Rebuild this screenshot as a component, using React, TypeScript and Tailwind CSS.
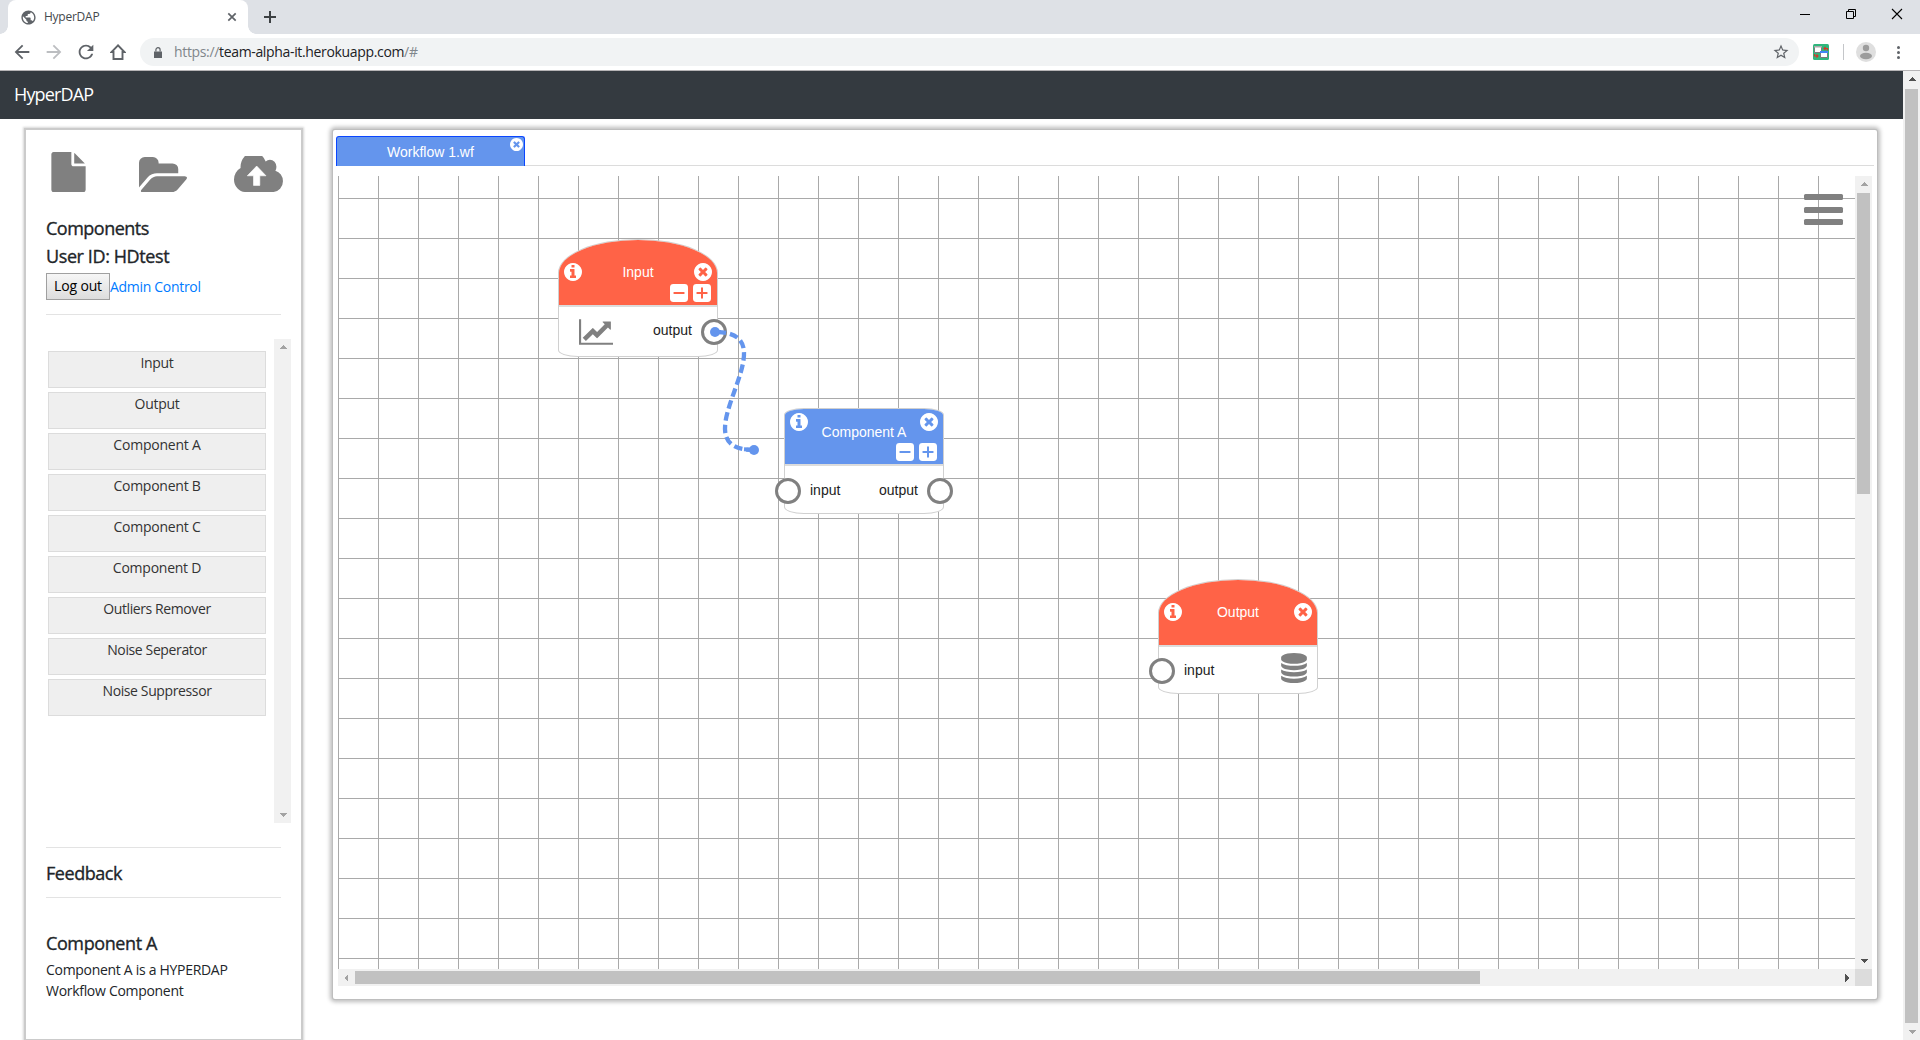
import React from "react";
import { MdPublic, MdArrowBack, MdArrowForward, MdRefresh, MdStarBorder } from "react-icons/md";

const CIRCLE =
  "M1536 896q0 209-103 385.5t-279.5 279.5-385.5 103-385.5-103-279.5-279.5-103-385.5 103-385.5 279.5-279.5 385.5-103 385.5 103 279.5 279.5 103 385.5z";

function InfoIcon({ className = "" }: { className?: string }) {
  return (
    <svg viewBox="0 128 1536 1536" className={`size-[18px] shrink-0 fill-white ${className}`}>
      <path
        fillRule="evenodd"
        d={`M1024 1376v-160q0-14-9-23t-23-9h-96v-512q0-14-9-23t-23-9h-320q-14 0-23 9t-9 23v160q0 14 9 23t23 9h96v320h-96q-14 0-23 9t-9 23v160q0 14 9 23t23 9h448q14 0 23-9t9-23zM896 480v-160q0-14-9-23t-23-9h-192q-14 0-23 9t-9 23v160q0 14 9 23t23 9h192q14 0 23-9t9-23z${CIRCLE}`}
      />
    </svg>
  );
}

function CloseIcon({ className = "size-[18px]" }: { className?: string }) {
  return (
    <svg viewBox="0 128 1536 1536" className={`shrink-0 fill-white ${className}`}>
      <path
        fillRule="evenodd"
        d={`M1149 1122q0-26-19-45l-181-181 181-181q19-19 19-45 0-27-19-46l-90-90q-19-19-46-19-26 0-45 19l-181 181-181-181q-19-19-45-19-27 0-46 19l-90 90q-19 19-19 46 0 26 19 45l181 181-181 181q-19 19-19 45 0 27 19 46l90 90q19 19 46 19 26 0 45-19l181-181 181 181q19 19 45 19 27 0 46-19l90-90q19-19 19-46z${CIRCLE}`}
      />
    </svg>
  );
}

function SquareIcon({ color, plus }: { color: string; plus?: boolean }) {
  return (
    <svg viewBox="0 0 18 18" className="size-[18px] shrink-0">
      <rect width="18" height="18" rx="3.4" fill="#fff" />
      <path d={plus ? "M4.300 9h9.400M9 4.300v9.400" : "M4.300 9h9.400"} stroke={color} strokeWidth="2" strokeLinecap="round" />
    </svg>
  );
}

function ChartIcon() {
  return (
    <svg viewBox="0 0 2048 1536" className="h-[26px] w-[34px] fill-[#808080]">
      <path d="M2048 1408v128h-2048v-1536h128v1408h1920zM1920 160v435q0 21-19.5 29.5t-35.5-7.5l-121-121-633 633q-10 10-23 10t-23-10l-233-233-416 416-192-192 585-585q10-10 23-10t23 10l233 233 464-464-121-121q-16-16-7.500-35.500t29.500-19.500h435q14 0 23 9t9 23z" />
    </svg>
  );
}

function DatabaseIcon() {
  return (
    <svg viewBox="0 0 1536 1792" className="h-[30px] w-[26px] fill-[#808080]">
      <path d="M768 768q237 0 443-43t325-127v170q0 69-103 128t-280 93.500-385 34.500-385-34.500-280-93.500-103-128v-170q119 84 325 127t443 43zM768 1536q237 0 443-43t325-127v170q0 69-103 128t-280 93.500-385 34.500-385-34.500-280-93.500-103-128v-170q119 84 325 127t443 43zM768 1152q237 0 443-43t325-127v170q0 69-103 128t-280 93.500-385 34.500-385-34.500-280-93.500-103-128v-170q119 84 325 127t443 43zM768 0q208 0 385 34.500t280 93.500 103 128v128q0 69-103 128t-280 93.500-385 34.500-385-34.500-280-93.500-103-128v-128q0-69 103-128t280-93.500 385-34.500z" />
    </svg>
  );
}

function Triangle({ dir, active }: { dir: "up" | "down" | "left" | "right"; active?: boolean }) {
  const points = { up: "0,5 4,1 8,5", down: "0,2 4,6 8,2", left: "5,0 1,4 5,8", right: "2,0 6,4 2,8" }[dir];
  return (
    <svg viewBox="0 0 8 8" className="size-2" shapeRendering="crispEdges">
      <polygon points={points} fill={active ? "#505050" : "#a3a3a3"} />
    </svg>
  );
}

function VScroll({ className = "", thumb, up, down }: { className?: string; thumb?: string; up?: boolean; down?: boolean }) {
  return (
    <div className={`flex w-[17px] shrink-0 flex-col items-center bg-[#f1f1f1] ${className}`}>
      <div className="flex h-[17px] items-center justify-center pt-px"><Triangle dir="up" active={up} /></div>
      {thumb && <div className={`w-[13px] bg-[#c1c1c1] ${thumb}`} />}
      <div className="mt-auto flex h-[17px] items-center justify-center"><Triangle dir="down" active={down} /></div>
    </div>
  );
}

function Port({ className }: { className: string }) {
  return <div className={`absolute size-[26px] rounded-full border-[3px] border-[#808080] bg-white ${className}`} />;
}

function BrowserBar() {
  return (
    <header className="h-[71px] shrink-0 border-b border-[#b6b4b6] bg-white">
      <div className="flex h-[34px] bg-[#dee1e6]">
        <div className="relative ml-2 flex h-[34px] w-[240px] items-center rounded-t-lg bg-white pl-[12px]">
          <div className="absolute bottom-0 -left-2 size-2 bg-[radial-gradient(circle_at_0_0,#dee1e6_7.500px,#fff_8px)]" />
          <div className="absolute -right-2 bottom-0 size-2 bg-[radial-gradient(circle_at_100%_0,#dee1e6_7.500px,#fff_8px)]" />
          <MdPublic className="size-[17px] text-[#5f6368]" />
          <span className="ml-[7px] text-[12px] leading-4 tracking-[-0.25px] text-[#45494d]">HyperDAP</span>
          <svg viewBox="0 0 8 8" className="mr-3 ml-auto size-2 overflow-visible"><path d="M.3.3l7.400 7.400M7.700.3L.3 7.700" stroke="#5f6368" strokeWidth="1.700" /></svg>
        </div>
        <svg viewBox="0 0 12 12" className="mt-[11px] ml-4 size-3"><path d="M6 0v12M0 6h12" stroke="#3c4043" strokeWidth="2" /></svg>
        <div className="mt-[9px] mr-[18px] ml-auto flex h-[11px] gap-9">
          <svg viewBox="0 0 10 10" className="size-[10px]"><path d="M0 5.500h10" stroke="#000" /></svg>
          <svg viewBox="0 0 10 10" className="size-[10px]"><path d="M.5 2.500h7v7h-7zM2.500 2.500v-2h7v7h-2" fill="none" stroke="#000" /></svg>
          <svg viewBox="0 0 10 10" className="size-[10px] overflow-visible"><path d="M0 0l10 10M10 0L0 10" stroke="#000" strokeWidth="1.100" /></svg>
        </div>
      </div>
      <div className="flex h-9 items-center">
        <MdArrowBack className="ml-[11px] size-[22px] text-[#5f6368]" />
        <MdArrowForward className="ml-[10px] size-[22px] text-[#bcbec1]" />
        <MdRefresh className="ml-[10px] size-[22px] text-[#5f6368]" />
        <svg viewBox="0 0 16 16" className="ml-[13px] size-4"><path d="M8 1.300L1.600 8H3.500v7h9V8h1.900z" fill="none" stroke="#5f6368" strokeWidth="1.900" /></svg>
        <div className="ml-[14px] flex h-7 w-[1659px] items-center rounded-full bg-[#f1f3f4] pl-[14px]">
          <svg viewBox="0 0 8 11" className="h-[11px] w-2"><path d="M0 4.500h8v6.500H0z" fill="#5f6368" /><path d="M1.900 4.500V2.800a2.100 2.100 0 0 1 4.200 0v1.700" fill="none" stroke="#5f6368" strokeWidth="1.200" /></svg>
          <span className="ml-3 text-[14px] leading-5 tracking-[-0.34px] text-[#80868b]">
            https://<span className="text-[#202124]">team-alpha-it.herokuapp.com</span>/#
          </span>
          <MdStarBorder className="mr-[9px] ml-auto size-[18px] text-[#5f6368]" />
        </div>
        <svg viewBox="0 0 16 16" className="ml-[14px] size-4">
          <rect width="16" height="16" rx="1.500" fill="#2fb67c" />
          <path d="M1.500 2.500h7v6h-7z" fill="#fff" stroke="#7a7a7a" />
          <path d="M1 2h8v1.500H1z" fill="#aaa" />
          <path d="M7.500 7.500h7v6h-7z" fill="#fff" stroke="#7a7a7a" />
          <path d="M7 7h8v2H7z" fill="#4285f4" />
          <path d="M14.500 6.500v-2H11M12.500 3L11 4.500 12.500 6M1.500 10v2H5M3.500 10.500L5 12l-1.500 1.500" fill="none" stroke="#d8352a" strokeWidth="1.200" />
        </svg>
        <div className="ml-[14px] h-4 w-px bg-[#c4c6c9]" />
        <svg viewBox="0 0 20 20" className="ml-3 size-5"><circle cx="10" cy="10" r="10" fill="#dfdfdf" /><circle cx="10" cy="6" r="3.200" fill="#9c9c9c" /><ellipse cx="10" cy="14" rx="6" ry="3.300" fill="#9c9c9c" /></svg>
        <div className="ml-[21px] flex flex-col gap-[2px]">
          <i className="size-[3px] rounded-full bg-[#5f6368]" />
          <i className="size-[3px] rounded-full bg-[#5f6368]" />
          <i className="size-[3px] rounded-full bg-[#5f6368]" />
        </div>
      </div>
    </header>
  );
}

const COMPONENTS: [string, string][] = [
  ["Input", "tracking-[-0.3px]"],
  ["Output", "tracking-[-0.3px]"],
  ["Component A", "tracking-[-0.22px]"],
  ["Component B", "tracking-[-0.25px]"],
  ["Component C", "tracking-[-0.25px]"],
  ["Component D", "tracking-[-0.25px]"],
  ["Outliers Remover", "tracking-[-0.4px]"],
  ["Noise Seperator", "tracking-[-0.38px]"],
  ["Noise Suppressor", "tracking-[-0.38px]"],
];

function Sidebar() {
  return (
    <aside className="mt-[11px] ml-[26px] h-[909px] w-[275px] shrink-0 bg-white pt-[22px] pl-5 shadow-[0_0_0_2px_#cbcbcb,0_0_2px_3px_#d6d6d6]">
      <div className="flex h-10 items-end pl-[5px]">
        <svg viewBox="0 0 1536 1792" className="h-10 w-[35px] fill-[#808080]">
          <path d="M1024 512v-472q22 14 36 28l408 408q14 14 28 36h-472zM896 544q0 40 28 68t68 28h544v1056q0 40-28 68t-68 28h-1344q-40 0-68-28t-28-68v-1600q0-40 28-68t68-28h800v544z" />
        </svg>
        <svg viewBox="0 128 1879 1408" preserveAspectRatio="none" className="ml-[53px] h-[35.500px] w-12 fill-[#808080]">
          <path d="M1879 952q0 31-31 66l-336 396q-43 51-120.500 86.500t-143.500 35.500h-1088q-34 0-60.500-13t-26.500-43q0-31 31-66l336-396q43-51 120.500-86.500t143.500-35.500h1088q34 0 60.500 13t26.500 43zM1536 608v160h-832q-94 0-197 47.500t-164 119.500l-337 396-5 6q0-4-.5-12.500t-.5-12.500v-960q0-92 66-158t158-66h320q92 0 158 66t66 158v32h544q92 0 158 66t66 158z" />
        </svg>
        <svg viewBox="0 0 49 36" className="ml-[47px] h-9 w-[49px]">
          <path transform="translate(0 -7.150) scale(.0255 .0281)" d="M1920 1152q0 159-112.500 271.500t-271.500 112.500h-1088q-185 0-316.500-131.500t-131.500-316.500q0-130 70-240t188-165q-2-30-2-43 0-212 150-362t362-150q156 0 285.500 87t188.500 231q71-62 166-62 106 0 181 75t75 181q0 76-41 138 130 31 213.500 135.500t83.500 238.500z" fill="#808080" />
          <path d="M22.700 10l9.300 9.800h-6.200v9.600h-6.300v-9.600h-6.200z" fill="#fff" stroke="#fff" strokeWidth=".6" strokeLinejoin="round" />
        </svg>
      </div>
      <h2 className="mt-[25px] text-[18px] leading-[22px] font-medium tracking-[-0.5px] [-webkit-text-stroke:0.35px_#212529]">Components</h2>
      <h2 className="mt-[6px] text-[18px] leading-[22px] font-medium tracking-[-0.4px] [-webkit-text-stroke:0.35px_#212529]">User ID: HDtest</h2>
      <div className="mt-[6px] flex h-[27px] text-[14px] leading-[21px]">
        <button className="w-16 border border-[#a0a0a0] bg-linear-to-b from-[#f6f6f6] to-[#dddddd] pt-px pb-[3px] leading-[21px] tracking-[-0.15px] text-black">Log out</button>
        <a className="pt-[3px] tracking-[-0.3px] text-[#007bff]">Admin Control</a>
      </div>
      <div className="mt-[14px] h-px w-[235px] bg-[#e3e3e3]" />
      <div className="mt-6 flex h-[484px]">
        <ul className="mt-3 ml-[2px] flex w-[218px] flex-col gap-1">
          {COMPONENTS.map(([name, tracking]) => (
            <li key={name} className={`h-[37px] border border-[#dcdcdc] bg-[#efefef] text-center text-[14px] leading-[21px] text-[#333] ${tracking}`}>{name}</li>
          ))}
        </ul>
        <VScroll className="ml-2" />
      </div>
      <div className="mt-6 h-px w-[235px] bg-[#e3e3e3]" />
      <h2 className="mt-[14px] text-[18px] leading-[22px] font-medium tracking-[-0.45px] [-webkit-text-stroke:0.35px_#212529]">Feedback</h2>
      <div className="mt-[13px] h-px w-[235px] bg-[#e3e3e3]" />
      <h2 className="mt-[34px] text-[18px] leading-[22px] font-medium tracking-[-0.4px] [-webkit-text-stroke:0.35px_#212529]">Component A</h2>
      <p className="mt-[5px] w-[220px] text-[14px] leading-[21px] tracking-[-0.3px]">
        Component A is a HYPERDAP
        <br />
        Workflow Component
      </p>
    </aside>
  );
}

function EndpointNode({ title, className, children, zoomable }: { title: string; className: string; children: React.ReactNode; zoomable?: boolean }) {
  return (
    <div className={`absolute w-[160px] ${className}`}>
      <div className="size-full overflow-hidden border border-[#d0d0d0] bg-white [border-top-left-radius:80px_34px] [border-top-right-radius:80px_34px] [border-bottom-left-radius:20px_7px] [border-bottom-right-radius:20px_7px]">
        <div className="h-[67px] border-b-2 border-[#dcdcdc] bg-[#ff6347] pt-[23px] text-white">
          <div className="flex items-center justify-between px-[5px] leading-[18px]">
            <InfoIcon />
            <span>{title}</span>
            <CloseIcon />
          </div>
          {zoomable && (
            <div className="mt-[3px] flex justify-end gap-[5px] pr-[6px]">
              <SquareIcon color="#ff6347" />
              <SquareIcon color="#ff6347" plus />
            </div>
          )}
        </div>
      </div>
      {children}
    </div>
  );
}

function Canvas() {
  return (
    <div className="relative h-[793px] w-[1517px] overflow-hidden bg-[linear-gradient(to_right,#a9a9a9_1px,transparent_1px),linear-gradient(to_bottom,#a9a9a9_1px,transparent_1px)] bg-[size:40px_40px] bg-[position:0_22px] text-[14px] text-[#222]">
      <EndpointNode title="Input" className="top-[63px] left-[220px] h-[118px]" zoomable>
        <div className="absolute top-[80px] left-[21px]"><ChartIcon /></div>
        <span className="absolute top-[81px] left-[95px] leading-[20px]">output</span>
        <Port className="top-[80px] left-[143px]" />
      </EndpointNode>

      <div className="absolute top-[232px] left-[446px] h-[106px] w-[160px]">
        <div className="size-full overflow-hidden border border-[#d0d0d0] bg-white [border-top-left-radius:20px_7px] [border-top-right-radius:20px_7px] [border-bottom-left-radius:20px_7px] [border-bottom-right-radius:20px_7px]">
          <div className="h-[57px] border-b-2 border-[#dcdcdc] bg-[#6495ed] pt-1 text-white">
            <div className="flex h-[18px] items-start justify-between px-[5px] leading-[18px]">
              <InfoIcon />
              <span className="mt-[10px]">Component A</span>
              <CloseIcon />
            </div>
            <div className="mt-[12px] flex justify-end gap-[5px] pr-[6px]">
              <SquareIcon color="#6495ed" />
              <SquareIcon color="#6495ed" plus />
            </div>
          </div>
        </div>
        <Port className="top-[70px] -left-[9px]" />
        <span className="absolute top-[72px] left-[26px] leading-[20px]">input</span>
        <span className="absolute top-[72px] left-[95px] leading-[20px]">output</span>
        <Port className="top-[70px] left-[143px]" />
      </div>

      <EndpointNode title="Output" className="top-[403px] left-[820px] h-[115px]">
        <Port className="top-[79px] -left-[9px]" />
        <span className="absolute top-[81px] left-[26px] leading-[20px]">input</span>
        <div className="absolute top-[74px] left-[123px]"><DatabaseIcon /></div>
      </EndpointNode>

      <svg className="absolute top-[146px] left-[367px] h-[138px] w-[60px] overflow-visible" viewBox="0 0 60 138">
        <path d="M10 10C91 10 -32 128 49 128" fill="none" stroke="#6495ed" strokeWidth="4.300" strokeDasharray="8.500 4" strokeDashoffset="-2.500" />
        <path d="M10 10h6M39 127.300l10 .7" stroke="#6495ed" strokeWidth="4" />
        <circle cx="10" cy="10" r="5" fill="#6495ed" />
        <circle cx="49" cy="128" r="5" fill="#6495ed" />
      </svg>

      <div className="absolute top-[18px] left-[1466px] flex w-[39px] flex-col gap-[6.700px]">
        <i className="h-[6px] rounded-[1.500px] bg-[#808080]" />
        <i className="h-[6px] rounded-[1.500px] bg-[#808080]" />
        <i className="h-[6px] rounded-[1.500px] bg-[#808080]" />
      </div>
    </div>
  );
}

function Workspace() {
  return (
    <main className="mt-[11px] ml-8 flex h-[869px] w-[1544px] shrink-0 flex-col rounded-[2px] bg-white font-['Liberation_Sans',Arial,sans-serif] shadow-[0_0_0_1px_#bebebe,0_0_4px_3px_#bcbcbc]">
      <div className="mt-[6px] ml-[3px] flex h-[30px]">
        <div className="flex w-[189px] rounded-t-[3px] border border-b-0 border-[#0a46ff] bg-[#6495ed] text-[14px] text-white">
          <span className="ml-[50px] pt-[5px] leading-[20px]">Workflow 1.wf</span>
          <CloseIcon className="mt-px mr-px ml-auto size-[13px]" />
        </div>
        <div className="w-[1349px] border-b border-[#dcdcdc]" />
      </div>
      <div className="mt-[10px] ml-[5px] flex">
        <Canvas />
        <VScroll thumb="h-[301px]" down />
      </div>
      <div className="ml-[5px] flex h-[17px]">
        <div className="flex w-[1517px] items-center bg-[#f1f1f1]">
          <div className="flex w-[17px] justify-center"><Triangle dir="left" /></div>
          <div className="h-[13px] w-[1125px] bg-[#c1c1c1]" />
          <div className="ml-auto flex w-[17px] justify-center"><Triangle dir="right" active /></div>
        </div>
        <div className="w-[17px] bg-[#dcdcdc]" />
      </div>
    </main>
  );
}

export default function App() {
  return (
    <div className="flex h-[1040px] w-[1920px] flex-col overflow-hidden bg-white font-['Open_Sans','Noto_Sans',sans-serif] text-[#212529]">
      <BrowserBar />
      <div className="flex h-[969px]">
        <div className="w-[1903px]">
          <nav className="flex h-12 items-center bg-[#343a40] pl-[14px]">
            <span className="-mt-0.5 text-[18px] leading-[22px] tracking-[-0.85px] text-white">HyperDAP</span>
          </nav>
          <div className="flex h-[921px] overflow-hidden">
            <Sidebar />
            <Workspace />
          </div>
        </div>
        <VScroll thumb="h-[934px] mt-px" up />
      </div>
    </div>
  );
}
